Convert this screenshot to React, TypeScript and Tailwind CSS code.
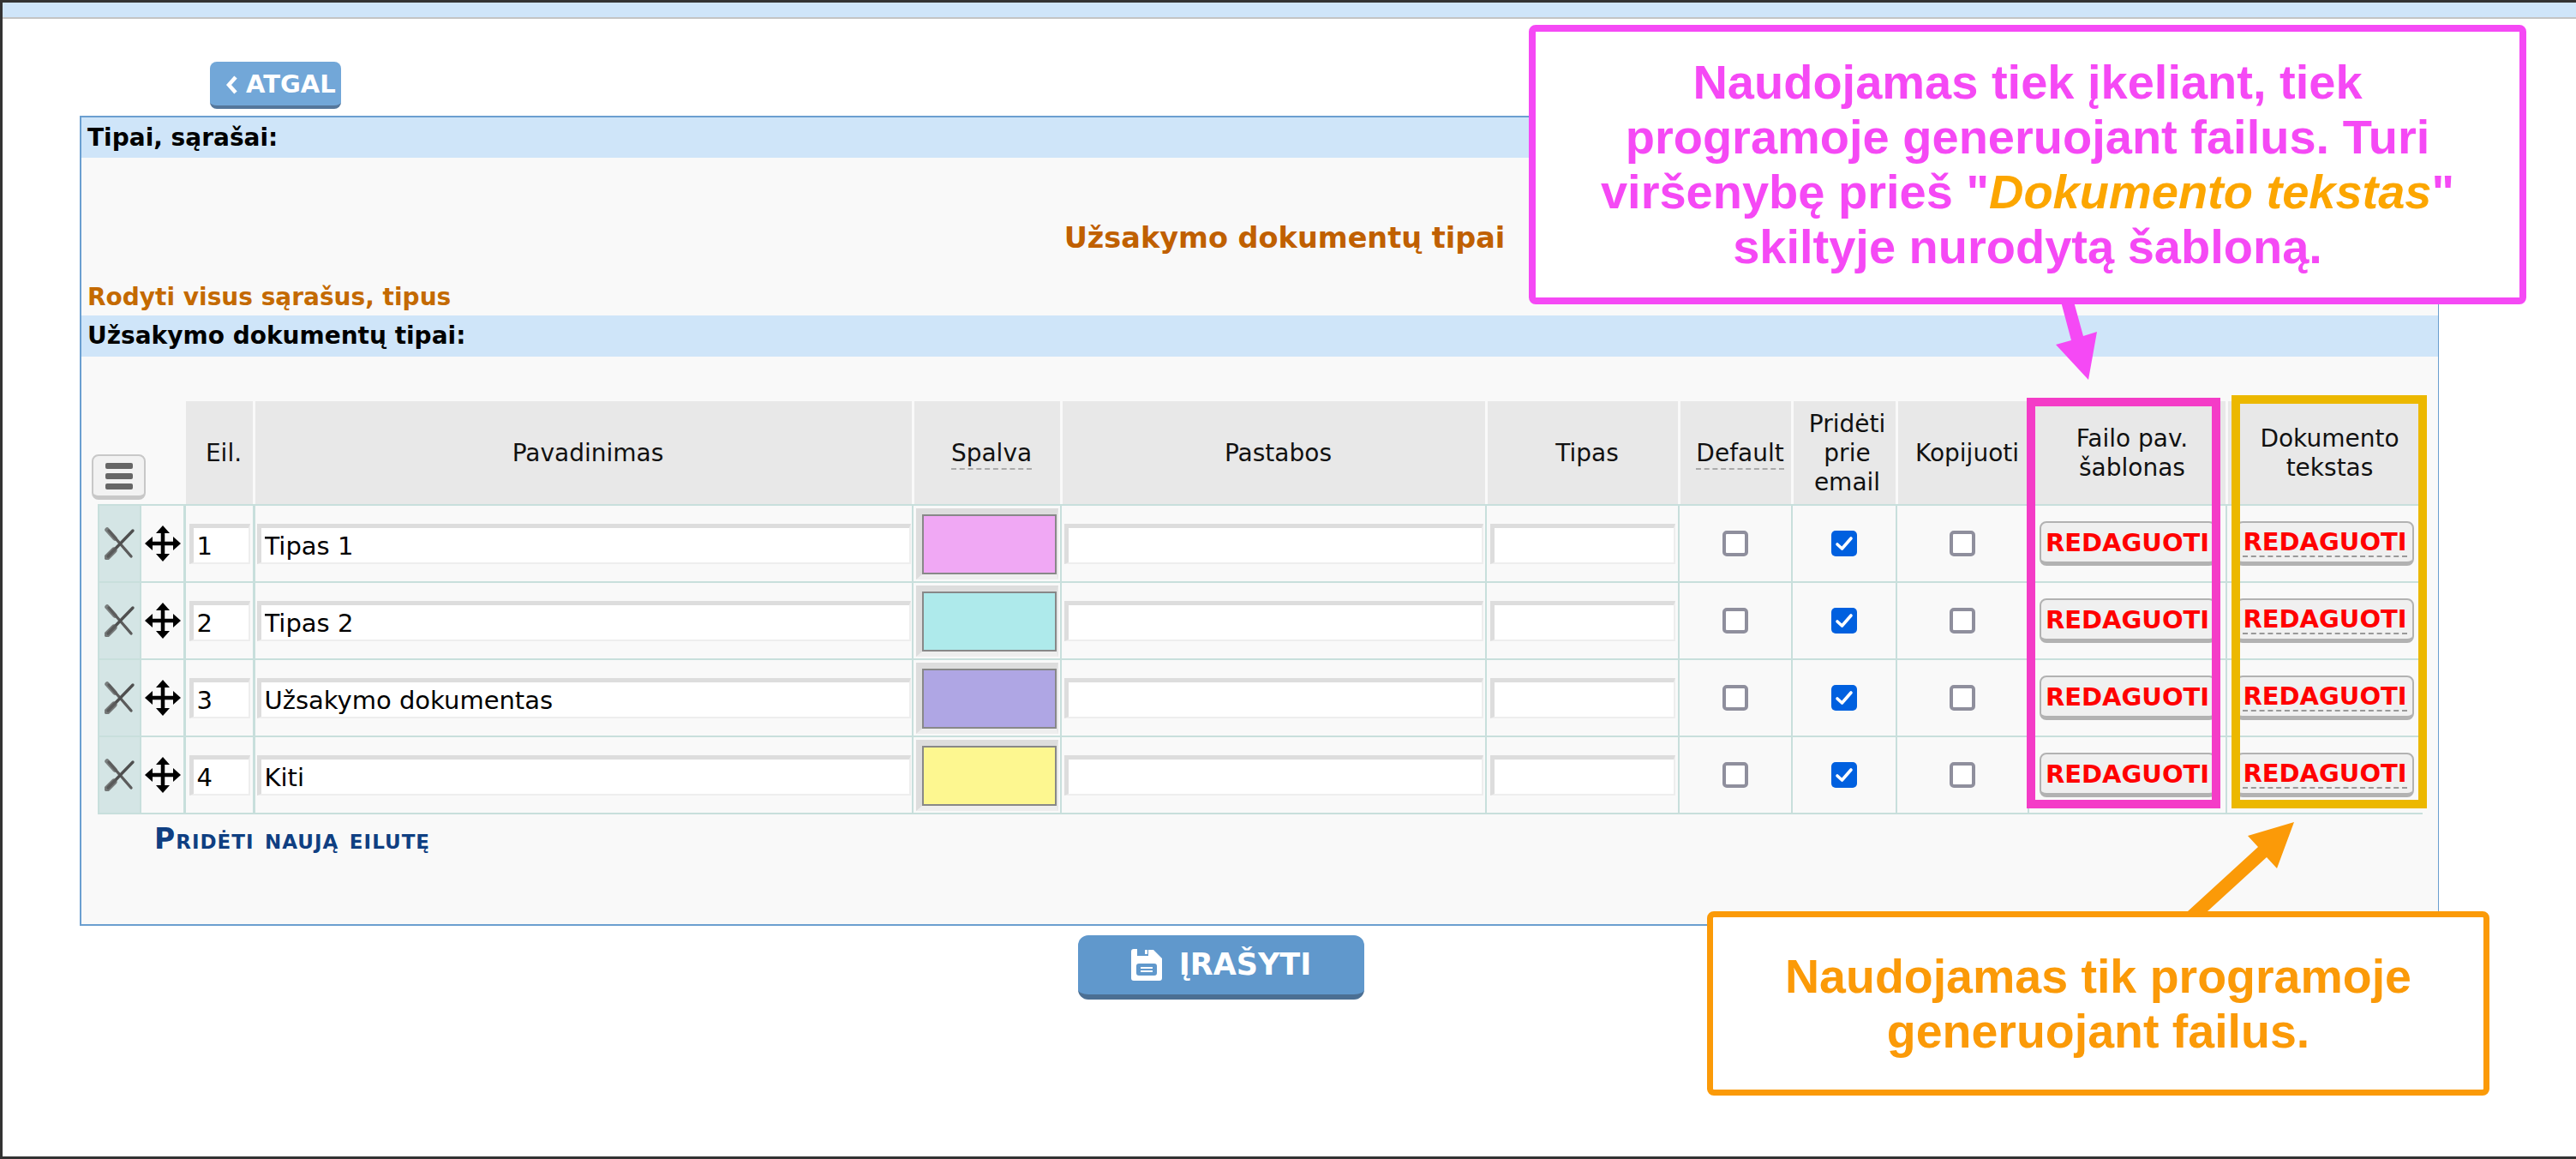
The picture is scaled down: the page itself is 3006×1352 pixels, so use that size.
import React from 'react';

/* ── Drawn icons ─────────────────────────────────────────── */
const DeleteIcon: React.FC = () => (
  <svg width="36" height="38" viewBox="0 0 36 38" fill="none" aria-hidden="true" className="mx-auto">
    <path d="M5 4 L31 34" stroke="#5c5c5c" strokeWidth="3.4" strokeLinecap="round" />
    <path d="M3 3 L12 13" stroke="#5c5c5c" strokeWidth="5.5" strokeLinecap="round" opacity="0.75" />
    <path d="M33 4 L4 34" stroke="#4f4f4f" strokeWidth="3.4" strokeLinecap="round" />
    <path d="M3 35 L11 27" stroke="#5c5c5c" strokeWidth="7" strokeLinecap="round" opacity="0.8" />
  </svg>
);

const MoveIcon: React.FC = () => (
  <svg width="44" height="44" viewBox="0 0 44 44" aria-hidden="true" className="mx-auto">
    <path d="M22 8 V36 M8 22 H36" stroke="#000" strokeWidth="4.5" />
    <path d="M22 1 L30 10 H14 Z M22 43 L30 34 H14 Z M1 22 L10 14 V30 Z M43 22 L34 14 V30 Z" fill="#000" />
  </svg>
);

const SaveIcon: React.FC = () => (
  <svg width="36" height="37" viewBox="0 0 36 37" aria-hidden="true">
    <path
      fillRule="evenodd"
      fill="#fff"
      d="M3 0 H7 V8 H20 V1 H26 L36 11 V34 Q36 37 33 37 H3 Q0 37 0 34 V3 Q0 0 3 0 Z M9 17 Q6 17 6 20 V28 Q6 31 9 31 H27 Q30 31 30 28 V20 Q30 17 27 17 Z"
    />
    <path d="M11 21 H25 V23 H11 Z M11 25 H25 V27 H11 Z" fill="#fff" />
    <path d="M16 1 H19 V6 H16 Z" fill="#fff" />
  </svg>
);

const CheckMark: React.FC<{ checked: boolean }> = ({ checked }) =>
  checked ? (
    <span className="mx-auto flex h-[30px] w-[30px] items-center justify-center rounded-[5px] bg-[#0060df]">
      <svg width="22" height="20" viewBox="0 0 22 20" fill="none" aria-hidden="true">
        <path d="M3 11 L8.5 16 L19 4" stroke="#fff" strokeWidth="3.6" strokeLinecap="round" strokeLinejoin="round" />
      </svg>
    </span>
  ) : (
    <span className="mx-auto block h-[30px] w-[30px] rounded-[5px] border-4 border-[#8f8f9d] bg-white" />
  );

/* ── Table bits ──────────────────────────────────────────── */
const rows = [
  { nr: '1', name: 'Tipas 1', color: 'bg-[#f0a8f4]' },
  { nr: '2', name: 'Tipas 2', color: 'bg-[#aeeaeb]' },
  { nr: '3', name: 'Užsakymo dokumentas', color: 'bg-[#afa6e4]' },
  { nr: '4', name: 'Kiti', color: 'bg-[#fdf790]' },
];

const inputCls =
  'block mx-auto h-[47px] border-t-[5px] border-l-[5px] border-r-2 border-b-2 border-t-[#dddddd] border-l-[#dddddd] border-r-[#eeeeee] border-b-[#eeeeee] bg-white pl-[4px] pt-[3px] text-[29px] text-black outline-none';

const thCls =
  'pl-[10px] pt-[2px] pb-0 pr-0 bg-[#e8e8e8] border-l-[3px] border-[#f9f9f9] font-normal text-[28px] leading-[34px] text-[#111]';
const thTightCls =
  'pl-[6px] pt-[2px] pb-0 pr-0 bg-[#e8e8e8] border-l-[3px] border-[#f9f9f9] font-normal text-[28px] leading-[34px] text-[#111]';
const tdCls = 'p-0 h-[90px] border-t-2 border-l-2 border-[#c8dfdc]';

const dottedCls = 'border-b-2 border-dashed border-[#aaaaaa] pb-[1px]';

const EditButton: React.FC<{ dotted?: boolean; w: string }> = ({ dotted, w }) => (
  <button
    className={`mx-auto flex h-[52px] ${w} items-center justify-center rounded-[8px] border-2 border-b-[5px] border-[#b2b2b2] bg-[#f0f0f0] text-[29px] font-bold text-[#ff0000]`}
  >
    <span className={dotted ? 'border-b-2 border-dashed border-[#999999] leading-[32px]' : 'leading-[32px]'}>REDAGUOTI</span>
  </button>
);

export default function App() {
  return (
    <div className="relative h-[1352px] w-[3006px] overflow-hidden border-y-[3px] border-l-[3px] border-[#333333] bg-white font-['DejaVu_Sans',sans-serif]">
      {/* Top strip */}
      <div className="h-[19px] border-b-2 border-[#c4c4c4] bg-[#cfe5f9]" />

      {/* Back */}
      <button className="ml-[242px] mt-[50px] flex h-[55px] w-[153px] items-center gap-[8px] rounded-[8px] border-b-[4px] border-[#55779b] bg-[#72a7d8] pl-[18px] pt-[2px] text-[29px] font-bold text-white">
        <svg width="16" height="22" viewBox="0 0 16 22" fill="none" aria-hidden="true">
          <path d="M12 2 L4 11 L12 20" stroke="#fff" strokeWidth="4.5" />
        </svg>
        ATGAL
      </button>

      {/* Panel */}
      <div className="ml-[90px] mt-[8px] h-[945px] w-[2753px] border-2 border-r border-[#6b9fd0] bg-[#f9f9f9]">
        <div className="flex h-[47px] items-center bg-[#cfe5f9] pl-[7px] text-[28px] font-bold text-black">Tipai, sąrašai:</div>

        <div className="flex h-[149px] items-end justify-center pb-[30px] pl-[58px] text-[33.5px] font-bold text-[#c06000]">
          Užsakymo dokumentų tipai
        </div>

        <div className="flex h-[35px] items-center pb-[8px] pl-[7px] text-[28px] font-bold text-[#c46a00]">Rodyti visus sąrašus, tipus</div>

        <div className="flex h-[48px] items-center bg-[#cfe5f9] pl-[7px] text-[28px] font-bold text-black">Užsakymo dokumentų tipai:</div>

        <table className="ml-[19px] mt-[52px] w-[2713px] table-fixed border-separate border-spacing-0 border-b-2 border-[#c8dfdc]">
          <colgroup>
            <col className="w-[49px]" />
            <col className="w-[51px]" />
            <col className="w-[81px]" />
            <col className="w-[769px]" />
            <col className="w-[173px]" />
            <col className="w-[496px]" />
            <col className="w-[225px]" />
            <col className="w-[132px]" />
            <col className="w-[122px]" />
            <col className="w-[154px]" />
            <col className="w-[231px]" />
            <col className="w-[230px]" />
          </colgroup>
          <thead>
            <tr className="h-[120px]">
              <th colSpan={2} className="p-0 align-bottom">
                <button className="mb-[5px] ml-[-7px] flex h-[53px] w-[63px] flex-col items-center justify-center gap-[5px] rounded-[8px] border-2 border-b-[5px] border-[#c8c8c8] bg-[#f2f2f2]">
                  <span className="h-[7px] w-[32px] rounded-[2px] bg-[#666666]" />
                  <span className="h-[7px] w-[32px] rounded-[2px] bg-[#666666]" />
                  <span className="h-[7px] w-[32px] rounded-[2px] bg-[#666666]" />
                </button>
              </th>
              <th className={thCls}>Eil.</th>
              <th className={thCls}>Pavadinimas</th>
              <th className={thCls}>
                <span className={dottedCls}>Spalva</span>
              </th>
              <th className={thCls}>Pastabos</th>
              <th className={thCls}>Tipas</th>
              <th className={thCls}>
                <span className={dottedCls}>Default</span>
              </th>
              <th className={thTightCls}>
                Pridėti
                <br />
                prie
                <br />
                email
              </th>
              <th className={thCls}>Kopijuoti</th>
              <th className={thCls}>
                Failo pav.
                <br />
                šablonas
              </th>
              <th className={thCls}>
                Dokumento
                <br />
                tekstas
              </th>
            </tr>
          </thead>
          <tbody>
            {rows.map(r => (
              <tr key={r.nr}>
                <td className={`${tdCls} bg-[#d4e5e5]`}>
                  <DeleteIcon />
                </td>
                <td className={tdCls}>
                  <MoveIcon />
                </td>
                <td className={`${tdCls} border-l-[3px]`}>
                  <input readOnly defaultValue={r.nr} className={`${inputCls} w-[71px]`} />
                </td>
                <td className={`${tdCls} border-l-[3px]`}>
                  <input readOnly defaultValue={r.name} className={`${inputCls} w-[763px]`} />
                </td>
                <td className={tdCls}>
                  <div className="mx-auto h-[83px] w-[166px] border-t-[7px] border-l-[7px] border-r-2 border-b-[6px] border-t-[#dddddd] border-l-[#dddddd] border-r-[#e6e6e6] border-b-[#eeeeee]">
                    <div className={`h-full w-full border-2 border-[#888888] ${r.color}`} />
                  </div>
                </td>
                <td className={tdCls}>
                  <input readOnly className={`${inputCls} w-[489px]`} />
                </td>
                <td className={tdCls}>
                  <input readOnly className={`${inputCls} w-[216px]`} />
                </td>
                <td className={tdCls}>
                  <CheckMark checked={false} />
                </td>
                <td className={tdCls}>
                  <CheckMark checked />
                </td>
                <td className={tdCls}>
                  <CheckMark checked={false} />
                </td>
                <td className={tdCls}>
                  <EditButton w="w-[206px]" />
                </td>
                <td className={tdCls}>
                  <EditButton dotted w="w-[208px]" />
                </td>
              </tr>
            ))}
          </tbody>
        </table>

        <a className="ml-[85px] mt-[12px] block text-[33px] leading-[34px] font-bold tracking-[1px] text-[#0f3f82] [font-variant:small-caps]">
          Pridėti naują eilutę
        </a>
      </div>

      {/* Save */}
      <button className="ml-[1255px] mt-[11px] flex h-[75px] w-[334px] items-center justify-center gap-[20px] rounded-[12px] border-b-[6px] border-[#4b6f93] bg-[#6098cc] text-[35px] font-bold text-white">
        <SaveIcon />
        ĮRAŠYTI
      </button>

      {/* ── Annotations over the page ───────────────────────── */}
      <div className="absolute left-[2362px] top-[461px] h-[479px] w-[226px] border-[10px] border-[#f43cc7]" />
      <div className="absolute left-[2601px] top-[458px] h-[482px] w-[228px] border-[10px] border-[#ecb800]" />

      <div className="absolute left-[1781px] top-[26px] flex h-[326px] w-[1164px] items-center justify-center rounded-[8px] border-[8px] border-[#f549f5] bg-white text-center font-['Liberation_Sans',sans-serif] text-[56px] font-bold leading-[64px] text-[#f549f5]">
        <p>
          Naudojamas tiek įkeliant, tiek
          <br />
          programoje generuojant failus. Turi
          <br />
          viršenybę prieš "<em className="text-[#fca600]">Dokumento tekstas</em>"
          <br />
          skiltyje nurodytą šabloną.
        </p>
      </div>
      <svg className="absolute left-[2392px] top-[349px]" width="60" height="92" viewBox="0 0 60 92" aria-hidden="true">
        <path d="M10 0 H25 L36 40 L52 35 L42 91 L4 50 L22 45 Z" fill="#f549f5" />
      </svg>

      <div className="absolute left-[1989px] top-[1060px] flex h-[215px] w-[913px] items-center justify-center rounded-[8px] border-[7px] border-[#fb9a08] bg-white text-center font-['Liberation_Sans',sans-serif] text-[55.5px] font-bold leading-[64px] text-[#fb9a08]">
        <p>
          Naudojamas tik programoje
          <br />
          generuojant failus.
        </p>
      </div>
      <svg className="absolute left-[2545px] top-[953px]" width="135" height="112" viewBox="0 0 135 112" aria-hidden="true">
        <path d="M5 107 L87 32 L75 19 L129 3 L109 57 L97 44 L28 107 Z" fill="#fb9a08" />
      </svg>
    </div>
  );
}
